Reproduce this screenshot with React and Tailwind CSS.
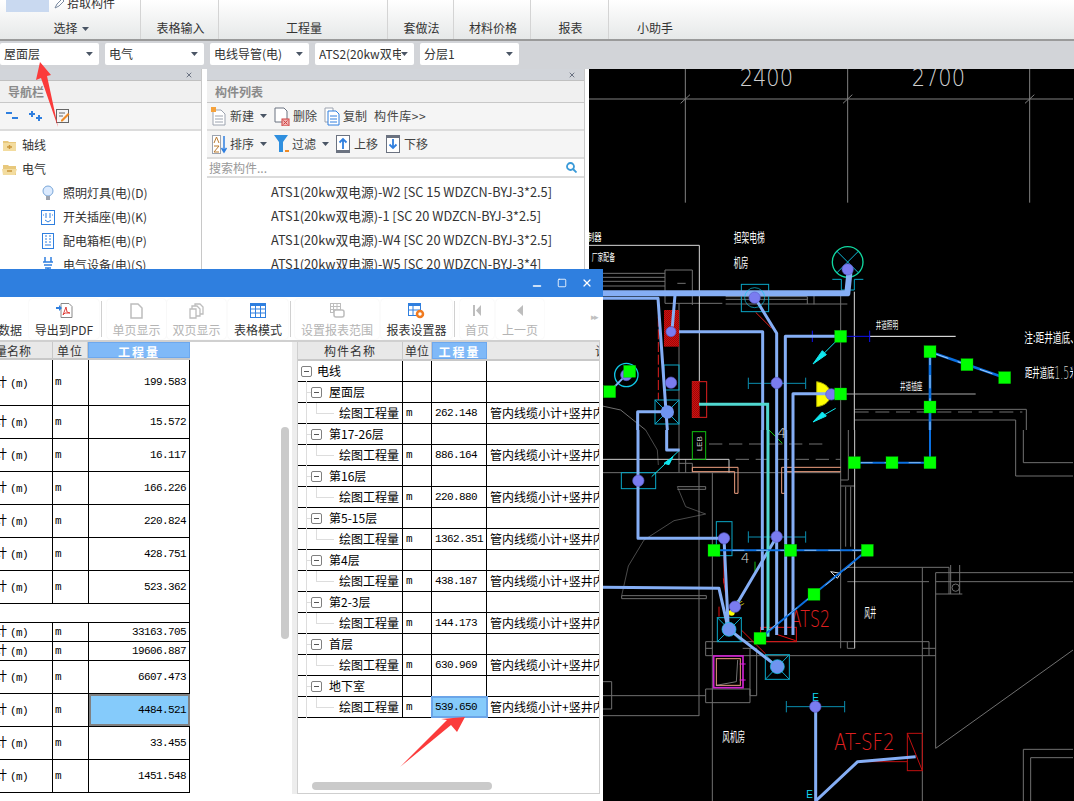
import React from 'react';
import { X, Minus, Square } from 'lucide-react';

const cjk = "font-['Noto_Sans_CJK_SC',sans-serif]";
const mono = "font-['Liberation_Mono','Noto_Sans_CJK_SC',monospace]";

const Caret = ({ className = 'text-gray-600' }) => (
  <svg width="7" height="4" viewBox="0 0 7 4" className={className}><path d="M0 0h7L3.5 4z" fill="currentColor" /></svg>
);

// top ribbon group labels
const RibbonGroup = ({ label, className, caret }) => (
  <div className={`flex items-end justify-center gap-1 pb-[2px] pl-[2px] border-r border-[#d4d4d4] text-[12px] text-[#333] ${className}`}>
    <span>{label}</span>
    {caret && <span className="pb-[6px]"><Caret /></span>}
  </div>
);

const Combo = ({ label }) => (
  <div className="w-[99px] h-[22px] bg-white rounded-[2px] flex items-center justify-between pl-1 pr-[6px] text-[12px] text-[#333]">
    <span className="overflow-hidden whitespace-nowrap w-[84px]">{label}</span>
    <Caret />
  </div>
);

const PanelHead = ({ title }) => (
  <>
    <div className="h-[12px] bg-[#d2d5da] flex items-center justify-end pr-2 border-b border-[#c0c0c0]">
      <X size={8} strokeWidth={3} className="text-gray-500" />
    </div>
    <div className="h-[22px] bg-[#f0f0f0] border-b border-[#c8c8c8] flex items-center px-2 text-[12px] font-bold text-[#8a8a8a]">{title}</div>
  </>
);

const TreeItem = ({ icon, label, child }) => (
  <div className={`h-6 flex items-center text-[12px] text-[#333] whitespace-nowrap ${child ? 'pl-[41px] gap-[8px]' : 'pl-[2px] gap-[5px]'}`}>
    {icon}
    <span>{label}</span>
  </div>
);

const Folder = ({ open }) => (
  <svg width="15" height="13" viewBox="0 0 15 13">
    <path d="M1 2h5l1 1h7v9H1z" fill="#e8c87c" />
    <path d={open ? 'M0 6h15l-2 6H1z' : 'M1 4h13v8H1z'} fill="#f3dc9f" />
    <path d="M5 8h5" stroke="#c9963a" strokeWidth="1.5" />
    {!open && <path d="M7.500 6v4" stroke="#c9963a" strokeWidth="1.5" />}
  </svg>
);

const Bulb = () => (
  <svg width="14" height="17" viewBox="0 0 14 17">
    <circle cx="7" cy="6" r="5" fill="#dbeafe" stroke="#7aa7d8" />
    <path d="M5 11h4v4H5z" fill="#9ca3af" />
  </svg>
);
const SwitchIcon = () => (
  <svg width="14" height="15" viewBox="0 0 14 15" fill="none" stroke="#2f7fdf">
    <rect x=".5" y=".5" width="13" height="14" />
    <path d="M5 3v5M9 3v5M4 10l3 2 3-2M2 5h1M11 5h1" />
  </svg>
);
const Cabinet = () => (
  <svg width="14" height="16" viewBox="0 0 14 16" fill="none" stroke="#2f7fdf">
    <rect x="1.500" y=".5" width="11" height="15" />
    <path d="M4 3h2M8 3h2M4 6h2M8 6h2M4 9h2M8 9h2M4 12h6" />
  </svg>
);
const Device = () => (
  <svg width="14" height="16" viewBox="0 0 14 16" fill="none" stroke="#2f7fdf" strokeWidth="1.500">
    <path d="M4 0v5M10 0v5M2 5h10M3 8h8M4 11h6M7 11v4M3 15h8" />
  </svg>
);

// toolbar icons for the list panel
const DocNew = () => (
  <svg width="16" height="19" viewBox="0 0 16 19">
    <path d="M2 3h8l4 4v11H2z" fill="#fff" stroke="#9ca3af" />
    <path d="M4 9h8M4 12h8M4 15h8" stroke="#9ca3af" />
    <rect x="0" y="0" width="5" height="5" fill="#f5a23c" />
  </svg>
);
const DocDel = () => (
  <svg width="16" height="19" viewBox="0 0 16 19">
    <path d="M1 1h9l3 3v11H1z" fill="#fff" stroke="#6b7280" />
    <rect x="8" y="12" width="7" height="7" fill="#f0b4b4" stroke="#d04040" />
    <path d="M9.500 13.500l4 4M13.500 13.500l-4 4" stroke="#d04040" />
  </svg>
);
const DocCopy = () => (
  <svg width="16" height="19" viewBox="0 0 16 19" fill="#fff">
    <path d="M1 1h8v14H1z" stroke="#9ca3af" />
    <path d="M4 4h8l3 3v11H4z" stroke="#2f7fdf" />
    <path d="M6 9h7M6 12h7M6 15h7" stroke="#2f7fdf" />
  </svg>
);
const SortIcon = () => (
  <svg width="15" height="19" viewBox="0 0 15 19" fill="none">
    <rect x=".5" y=".5" width="8" height="18" fill="#fff" stroke="#9ca3af" />
    <path d="M2 8l2.500-6L7 8M2 11h5l-5 6h5" stroke="#b97a2f" />
    <path d="M12 1v15M9.500 13l2.500 4 2.500-4" stroke="#2f7fdf" strokeWidth="1.500" />
  </svg>
);
const FilterIcon = () => (
  <svg width="15" height="18" viewBox="0 0 15 18">
    <path d="M0 0h14L9 7v10H5V7z" fill="#2f8fdf" />
    <path d="M11 15h4v2h-4z" fill="#f08a24" />
  </svg>
);
const MoveIcon = ({ down }) => (
  <svg width="14" height="18" viewBox="0 0 14 18" fill="none">
    <rect x=".5" y=".5" width="13" height="17" fill="#fff" stroke="#6b7280" />
    {down ? <path d="M0 0h14v3H0z" fill="#6b7280" /> : <path d="M0 15h14v3H0z" fill="#6b7280" />}
    <path d={down ? 'M7 4v9M3.500 9.500L7 13l3.500-3.500' : 'M7 14V4M3.500 7.500L7 4l3.500 3.500'} stroke="#2f7fdf" strokeWidth="1.800" />
  </svg>
);

const ToolBtn = ({ w, icon, label, dim }) => (
  <div className={`${w} h-[40px] bg-white rounded-[4px] shadow-[0_0_2px_#eee] flex flex-col items-center justify-between text-[12px] leading-[16px] whitespace-nowrap ${dim ? 'text-[#b4b4b4]' : 'text-[#333]'}`}>
    <div className="h-[20px] pt-[4px] flex items-center">{icon}</div>
    <span className="pb-[1px]">{label}</span>
  </div>
);
const Sep = () => <div className="w-px h-[36px] bg-[#d0d0d0] mx-[1px]" />;

const GreyDoc = () => (
  <svg width="13" height="16" viewBox="0 0 13 16"><path d="M1 1h7l4 4v10H1z" fill="#fff" stroke="#bdbdbd" strokeWidth="1.500" /></svg>
);
const GreyDocs = () => (
  <svg width="15" height="16" viewBox="0 0 15 16" fill="#fff" stroke="#bdbdbd" strokeWidth="1.300">
    <path d="M6 1h5l3 3v7H6z" /><path d="M3 3h5l3 3v7H3z" /><path d="M1 6h6v9H1z" />
  </svg>
);
const GridIcon = ({ color = '#2f7fdf', w = 16, h = 15 }) => (
  <svg width={w} height={h} viewBox="0 0 16 15" fill="none" stroke={color}>
    <rect x=".5" y=".5" width="15" height="14" />
    <path d="M0 1.500h16" strokeWidth="3" />
    <path d="M0 6h16M0 10h16M5.500 2v13M10.500 2v13" />
  </svg>
);
const PdfIcon = () => (
  <svg width="17" height="15" viewBox="0 0 17 15">
    <path d="M5 .5h8l3 3v11H5z" fill="#fff" stroke="#888" />
    <path d="M7 12l3-8 1 5 3 1-5 0z" fill="none" stroke="#e0403a" />
    <path d="M0 4h3V2l3 3-3 3V6H0z" fill="#2f7fdf" />
  </svg>
);
const RangeIcon = () => (
  <svg width="16" height="15" viewBox="0 0 16 15" fill="#fff" stroke="#bdbdbd">
    <rect x="1.500" y=".5" width="10" height="9" />
    <path d="M1.500 3.500h10M1.500 6.500h10M4.500 1v9M8 1v9" />
    <rect x="5" y="7" width="10" height="7" rx="2" strokeWidth="1.500" />
  </svg>
);
const ReportGear = () => (
  <svg width="17" height="16" viewBox="0 0 17 16" fill="none">
    <rect x=".5" y=".5" width="12" height="12" stroke="#2f7fdf" />
    <path d="M0 1.500h13" stroke="#2f7fdf" strokeWidth="3" />
    <path d="M0 7h13M5 2v11" stroke="#2f7fdf" />
    <circle cx="12" cy="11" r="3" stroke="#f07a20" strokeWidth="2.500" fill="#fff" />
  </svg>
);
const FirstIcon = () => (
  <svg width="8" height="11" viewBox="0 0 8 11" fill="#bdbdbd"><rect width="2" height="11" /><path d="M8 0v11L3 5.500z" /></svg>
);
const PrevIcon = () => (
  <svg width="6" height="11" viewBox="0 0 6 11" fill="#bdbdbd"><path d="M6 0v11L0 5.500z" /></svg>
);

// left report table, heights are the row heights of the sheet
const leftRows = [
  [46, '199.583'], [33, '15.572'], [33, '16.117'], [33, '166.226'], [33, '220.824'], [33, '428.751'], [33, '523.362'],
  [19, null], [19, '33163.705'], [19, '19606.887'], [33, '6607.473'], [33, '4484.521', true], [33, '33.455'], [33, '1451.548'],
];

const LeftTable = () => (
  <div className="w-[190px] text-[12px] text-black">
    <div className="h-[18px] flex bg-[#e8e8e8] border-b-2 border-[#c8c8c8] text-[#333] leading-[17px]">
      <div className="w-[53px] overflow-hidden whitespace-nowrap border-r border-[#c8c8c8]"><span className="-ml-[5px] block">量名称</span></div>
      <div className="w-[35px] text-center border-r border-[#c8c8c8] tracking-[1px]">单位</div>
      <div className="flex-1 text-center bg-[#7fb9f8] text-white font-bold tracking-[2px] border border-[#6da8ee]">工程量</div>
    </div>
    {leftRows.map(([h, v, sel], i) => (
      v ? (
        <div key={i} style={{ height: h }} className="flex border-b border-black">
          <div className="w-[53px] overflow-hidden border-r border-black flex items-center whitespace-nowrap">
            <span className="-ml-[5px]">计<span className={`${mono} text-[11px] tracking-[-0.6px] ml-[3px]`}>(m)</span></span>
          </div>
          <div className={`w-[36px] border-r border-black flex items-center pl-[2px] ${mono} text-[11px]`}>m</div>
          <div className={`flex-1 border-r border-black flex items-center justify-end pr-[3px] ${mono} text-[11px] tracking-[-0.6px] ${sel ? 'bg-[#85cbfb] outline-2 -outline-offset-2 outline-[#808080]' : ''}`}>{v}</div>
        </div>
      ) : (
        <div key={i} style={{ height: h }} className="border-b border-r border-black" />
      )
    ))}
  </div>
);

const rightRows = [
  { l: 0, name: '电线' },
  { l: 1, name: '屋面层' },
  { l: 2, v: '262.148' },
  { l: 1, name: '第17-26层' },
  { l: 2, v: '886.164' },
  { l: 1, name: '第16层' },
  { l: 2, v: '220.880' },
  { l: 1, name: '第5-15层' },
  { l: 2, v: '1362.351' },
  { l: 1, name: '第4层' },
  { l: 2, v: '438.187' },
  { l: 1, name: '第2-3层' },
  { l: 2, v: '144.173' },
  { l: 1, name: '首层' },
  { l: 2, v: '630.969' },
  { l: 1, name: '地下室' },
  { l: 2, v: '539.650', sel: true },
];

const MinusBox = () => (
  <span className="w-[11px] h-[11px] rounded-[2px] border border-[#808080] bg-white flex items-center justify-center shrink-0">
    <span className="w-[5px] h-px bg-[#555]" />
  </span>
);

const RightRow = ({ l, name, v, sel }) => (
  <div className="h-[21px] flex border-b border-black text-[12px] text-black">
    <div className={`relative w-[105px] border-r border-black flex items-center whitespace-nowrap ${l === 0 ? 'pl-[3px] gap-[5px]' : l === 1 ? 'pl-[13px] gap-[7px]' : 'pl-[41px]'}`}>
      {l > 0 && <span className="absolute left-[8px] -top-px -bottom-px w-px bg-[#ddd]" />}
      {l === 1 && <span className="absolute left-[8px] top-[10px] w-[5px] h-px bg-[#ddd]" />}
      {l === 2 && <span className="absolute left-[18px] top-0 h-[11px] w-[18px] border-l border-b border-[#ddd]" />}
      {l < 2 && <MinusBox />}
      <span className="text-[12px]">{name || '绘图工程量'}</span>
    </div>
    <div className={`w-[29px] border-r border-black flex items-center pl-[3px] ${mono} text-[11px]`}>{v ? 'm' : ''}</div>
    <div className={`w-[55px] border-r border-black flex items-center pl-[3px] ${mono} text-[11px] tracking-[-0.6px] ${sel ? 'bg-[#85cbfb] outline-2 -outline-offset-1 outline-[#6ba5e8]' : ''}`}>{v}</div>
    <div className="flex-1 overflow-hidden flex items-center pl-[3px] whitespace-nowrap">{v ? '管内线缆小计+竖井内' : ''}</div>
  </div>
);

const Dialog = () => (
  <div className={`absolute left-0 top-[269px] bottom-0 w-[603px] bg-white flex flex-col ${cjk}`}>
    <div className="h-[28px] shrink-0 bg-[#2f7fdf] flex items-center justify-end gap-[14px] pr-[10px] text-white">
      <Minus size={12} strokeWidth={3} className="translate-y-[3px]" />
      <Square size={10} strokeWidth={2} />
      <X size={12} strokeWidth={2.5} />
    </div>
    <div className="h-[45px] shrink-0 flex items-center pl-0 border-b-2 border-[#d0d0d0] mr-[3px] gap-[1px] overflow-hidden">
      <div className="w-[28px] h-[40px] overflow-hidden flex items-end text-[12px] leading-[16px] text-[#333] whitespace-nowrap"><span className="-ml-[2px] pb-[1px]">数据</span></div>
      <ToolBtn w="w-[70px]" icon={<PdfIcon />} label="导出到PDF" />
      <Sep />
      <ToolBtn w="w-[59px] ml-[3px]" dim icon={<GreyDoc />} label="单页显示" />
      <ToolBtn w="w-[59px]" dim icon={<GreyDocs />} label="双页显示" />
      <ToolBtn w="w-[60px] ml-[1px]" icon={<GridIcon />} label="表格模式" />
      <Sep />
      <ToolBtn w="w-[84px] ml-[2px]" dim icon={<RangeIcon />} label="设置报表范围" />
      <ToolBtn w="w-[71px] ml-[1px]" icon={<ReportGear />} label="报表设置器" />
      <Sep />
      <ToolBtn w="w-[34px] ml-[3px]" dim icon={<FirstIcon />} label="首页" />
      <ToolBtn w="w-[48px] ml-[1px]" dim icon={<PrevIcon />} label="上一页" />
      <div className="flex-1 flex justify-end pr-[3px] pb-[4px] text-[#c0c0c0] text-[9px] tracking-[-2px]">▸▸</div>
    </div>
    <div className="flex-1 flex min-h-0">
      <div className="relative w-[292px] shrink-0">
        <LeftTable />
        <div className="absolute left-[281px] top-[85px] w-[8px] h-[212px] rounded-[4px] bg-[#cacaca]" />
      </div>
      <div className="w-[6px] bg-[#ededed] border-r border-[#cfcfcf] h-[452px]" />
      <div className="relative w-[302px] h-[452px] border-b border-r border-[#cfcfcf]">
        <div className="h-[19px] flex bg-[#e8e8e8] border-b-2 border-[#c8c8c8] text-[12px] text-[#333] tracking-[1px] leading-[17px] overflow-hidden">
          <div className="w-[105px] text-center border-r border-[#c8c8c8]">构件名称</div>
          <div className="w-[29px] text-center border-r border-[#c8c8c8] tracking-[0px]">单位</div>
          <div className="w-[55px] text-center bg-[#7fb9f8] text-white font-bold tracking-[2px] border border-[#6da8ee]">工程量</div>
          <div className="flex-1 overflow-hidden whitespace-nowrap pl-[108px]">计算式</div>
        </div>
        {rightRows.map((r, i) => <RightRow key={i} {...r} />)}
        <div className="absolute left-[14px] bottom-[3px] w-[180px] h-[8px] rounded-[4px] bg-[#cacaca]" />
      </div>
    </div>
  </div>
);

// CAD canvas, coordinates are 3x page pixels with the origin at x=590, y=60
const G = ({ x, y }) => <rect x={x - 18} y={y - 18} width="36" height="36" fill="#00ff00" stroke="#00b000" strokeWidth="1" />;
const Dot = ({ x, y, r = 17 }) => (
  <circle cx={x} cy={y} r={r} fill="#7a7cf0" stroke="#5a5cc8" strokeWidth="2" />
);
const XBox = ({ x, y, w, h }) => (
  <g stroke="#0aa8c8" strokeWidth="3" fill="none">
    <rect x={x} y={y} width={w} height={h} />
    <path d={`M${x} ${y}L${x + w} ${y + h}M${x + w} ${y}L${x} ${y + h}`} />
  </g>
);
const Dim = ({ x1, x2, y, c = '#0a8fb0' }) => (
  <path d={`M${x1} ${y}H${x2}M${x1} ${y - 17}v34M${x2} ${y - 17}v34`} stroke={c} strokeWidth="3" fill="none" />
);
const T = ({ x, y, s = 30, c = '#fff', children, ...rest }) => (
  <text x={x} y={y} fontSize={s} fill={c} fontFamily="'Noto Sans CJK SC',sans-serif" lengthAdjust="spacingAndGlyphs" {...rest}>{children}</text>
);
const thin = "'DejaVu Sans',sans-serif";

const Cad = () => (
  <svg viewBox="0 27 1452 2196" width="484" height="732" className="block shrink-0">
    <defs>
      <pattern id="hatch" width="6" height="6" patternUnits="userSpaceOnUse">
        <rect width="6" height="6" fill="#d01010" />
        <path d="M0 6L6 0" stroke="#600" strokeWidth="1.500" />
      </pattern>
    </defs>
    {/* axis dimensions */}
    <g stroke="#808080" strokeWidth="3" fill="none">
      <path d="M0 117H1452M289 27V428M776 27V428M1322 27V428" />
      <path d="M275 130L303 104M762 130L790 104M1308 130L1336 104" />
    </g>
    <T x="452" y="77" s="74" c="#d0d0d0" textLength="160" fontFamily={thin} fontWeight="200">2400</T>
    <T x="968" y="77" s="74" c="#d0d0d0" textLength="160" fontFamily={thin} fontWeight="200">2700</T>

    <T x="-6" y="542" s="32" textLength="44">制器</T>
    <T x="8" y="602" s="30" textLength="70">厂家配备</T>
    <T x="434" y="545" s="38" textLength="93">担架电梯</T>
    <T x="434" y="620" s="38" textLength="44">机房</T>
    <T x="860" y="808" s="30" textLength="67">井道照明</T>
    <T x="933" y="990" s="30" textLength="67">井道插座</T>
    <T x="1306" y="846" s="38" textLength="190">注:距井道底、井</T>
    <T x="1308" y="950" s="38" textLength="88">距井道底</T>
    <T x="1396" y="956" s="54" c="#ccc" textLength="45" fontFamily={thin} fontWeight="200">1.5</T>
    <T x="1442" y="950" s="38" textLength="22">米</T>

    {/* walls upper */}
    <g stroke="#707070" strokeWidth="3" fill="none">
      <path d="M228 630H310V735M228 630V730H400M40 640H228M40 652H228M40 664H228M40 678H228M265 670H290M270 730V1110M410 710H655V732M410 718H655M410 732H775M675 708V733M755 700V1110" />
      <path d="M797 1048H1312V1110M797 1080H1280V1110" />
      <path d="M797 1056H1300" strokeDasharray="42 20" />
      <path d="M40 1038L95 1050L170 1110" />
    </g>
    <path d="M0 556H331V965M796 695V1110" stroke="#d8d8d8" strokeWidth="3" fill="none" />
    <path d="M208 770V1020" stroke="#e02020" strokeWidth="3" strokeDasharray="30 8" />
    <path d="M500 757L548 805" stroke="#e02020" strokeWidth="3" />
    <rect x="225" y="750" width="45" height="110" fill="url(#hatch)" />
    <rect x="310" y="965" width="43" height="107" fill="none" stroke="#e02020" strokeWidth="3" />
    <rect x="310" y="965" width="22" height="107" fill="url(#hatch)" />
    <path d="M842 829H1100" stroke="#fff" strokeWidth="3" />
    <path d="M770 1002H1160" stroke="#aaa" strokeWidth="3" />
    <path d="M772 829H842M670 812v34M842 812v34" stroke="#1010f0" strokeWidth="3" />

    {/* cyan symbols upper */}
    <g stroke="#0aa8c8" strokeWidth="3" fill="none">
      <rect x="457" y="673" width="82" height="82" />
      <rect x="225" y="915" width="45" height="75" />
      <path d="M730 658H757V690H796V658H823" />
      <circle cx="112" cy="945" r="35" stroke="#10c8e8" strokeWidth="4" />
    </g>
    <XBox x={198} y={1020} w={72} h={72} />
    <circle cx="776" cy="606" r="46" fill="none" stroke="#10d8a0" strokeWidth="4" />
    <path d="M743 573L809 639M809 573L743 639" stroke="#10b8d8" strokeWidth="3" />
    <Dim x1={478} x2={650} y={970} />
    <path d="M683 965C715 970 725 990 725 1003C725 1020 710 1038 683 1040Z" fill="#ffff00" stroke="#a8a800" strokeWidth="3" />

    {/* wires upper */}
    <g stroke="#85aef5" fill="none" strokeLinejoin="round">
      <path d="M0 700H775L782 630" strokeWidth="18" />
      <path d="M0 715H207L235 1110M258 705L250 800M270 815H521V1110M497 712L563 820V1110M740 829H589V1110M740 1001H612V1110M146 1110V1055H235" strokeWidth="9" />
      <path d="M62 995L122 934" strokeWidth="6" />
    </g>
    <path d="M330 1033H536V1110" stroke="#50d8d0" strokeWidth="9" fill="none" />
    <path d="M1023 875V1110M1023 875L1247 953" stroke="#0a6fe0" strokeWidth="8" fill="none" />
    <path d="M1023 875V1110M1040 882L1230 948" stroke="#fff" strokeWidth="2" strokeDasharray="40 30" fill="none" />
    <g stroke="#10e8f0" strokeWidth="3" fill="#10e8f0">
      <path d="M740 845L705 880" />
      <path d="M672 912L700 872L712 884Z" />
      <path d="M740 1045L705 1065" />
      <path d="M672 1086L700 1056L712 1068Z" />
    </g>
    <Dot x={776} y={628} />
    <Dot x={497} y={713} />
    <circle cx="497" cy="713" r="30" fill="none" stroke="#10c8e8" strokeWidth="2" />
    <Dot x={246} y={815} r={15} />
    <Dot x={246} y={968} />
    <Dot x={112} y={945} />
    <Dot x={563} y={969} />
    <Dot x={727} y={1003} />
    <circle cx="235" cy="1056" r="20" fill="#6f94f0" />
    <G x={755} y={829} />
    <G x={755} y={1002} />
    <G x={1023} y={875} />
    <G x={1134} y={914} />
    <G x={1247} y={953} />
    <G x={1023} y={1041} />
    <G x={122} y={934} />
    <G x={62} y={995} />

    {/* lower half, origin moved to page y=430 */}
    <g transform="translate(0 1110)">
      <g stroke="#707070" strokeWidth="3" fill="none">
        <path d="M38 128H755M330 128V858M38 797H350M38 857H330M38 755H68V837H38" />
        <path d="M755 0V655M775 455H1020M775 412H1080V492M1040 428H1452M1040 455H1452M1000 412V1113M1040 428V955M1040 955L1452 660M1040 492H1120M1085 405V492M1112 405V492" />
        <path d="M350 635H1020M350 677H1040M350 635V677M370 635V655H350M775 635V655H797M1020 635V677M1000 655H1040M350 777H483V818H350V777M461 655H503V797H483V655" />
        <path d="M370 128V1113M778 0V150H755M770 170V350M785 170V350M755 168H797" />
        <path d="M98 497H352V506H98ZM265 170H350V178H265" />
        <path d="M270 0V128M270 100H310V128M290 88V128" />
        <path d="M1280 0V138H1452M1303 0V98H1452" />
        <path d="M1303 1113V958H1452M1325 1113V983H1452" />
        <path d="M265 170L290 230L350 252L255 272L165 330L118 408L98 497M170 0L205 60L208 105" strokeWidth="2" />
        <circle cx="1100" cy="473" r="11" />
      </g>
      <path d="M38 88H420V128M797 0V655" stroke="#d0d0d0" strokeWidth="3" fill="none" />
      <path d="M360 42H705M440 88H755" stroke="#707070" strokeWidth="3" strokeDasharray="40 20" />
      <path d="M310 112H447V190H437V125H310ZM755 112H578V190H590V125H755" fill="none" stroke="#f0a080" strokeWidth="3" />
      <rect x="310" y="5" width="40" height="83" fill="none" stroke="#10c010" strokeWidth="3" />
      <T x="0" y="0" s="24" c="#ccc" fontFamily="'Liberation Sans',sans-serif" transform="translate(339 64) rotate(-90)">LEB</T>

      <rect x="374" y="678" width="88" height="95" fill="none" stroke="#d020d0" strokeWidth="5" />
      <rect x="382" y="686" width="72" height="80" fill="none" stroke="#f0a080" strokeWidth="3" />
      <path d="M382 766L442 755L446 690" stroke="#aaa" strokeWidth="2" fill="none" />
      <path d="M452 702H470M452 750H470" stroke="#e020e0" strokeWidth="3" />

      <g stroke="#e01010" strokeWidth="3" fill="none">
        <rect x="515" y="592" width="107" height="43" />
        <path d="M560 612L620 632M457 600L530 672M405 380V460M403 445L420 560M390 530V560" />
      </g>
      <g stroke="#c01010" strokeWidth="3" fill="none">
        <rect x="955" y="910" width="45" height="112" />
        <path d="M955 910L1000 1022M805 995H955" />
      </g>
      <T x="605" y="590" s="70" c="#e02020" textLength="118" fontFamily={thin} fontWeight="200">ATS2</T>
      <T x="735" y="960" s="70" c="#e02020" textLength="182" fontFamily={thin} fontWeight="200">AT-SF2</T>
      <T x="826" y="560" s="38" textLength="35">风井</T>
      <T x="400" y="932" s="38" textLength="68">风机房</T>
      <T x="455" y="400" s="42" c="#ddd" fontFamily={thin} fontWeight="200">4</T>
      <T x="565" y="24" s="42" c="#ddd" fontFamily={thin} fontWeight="200">4</T>
      <T x="670" y="812" s="30" c="#10d8f0" fontFamily="'Liberation Sans',sans-serif">E</T>
      <T x="652" y="1105" s="30" c="#10d8f0" fontFamily="'Liberation Sans',sans-serif">E</T>
      <T x="450" y="530" s="28" c="#e8e020" fontFamily="'Liberation Sans',sans-serif" transform="rotate(-30 450 530)">E</T>
      <path d="M725 425L755 430L745 445Z" fill="none" stroke="#ddd" strokeWidth="3" />
      <path d="M498 395V425" stroke="#10c010" strokeWidth="3" />
      <path d="M540 0L580 40" stroke="#10c010" strokeWidth="3" />

      <g stroke="#0aa8c8" strokeWidth="3" fill="none">
        <rect x="97" y="128" width="103" height="48" />
        <rect x="382" y="275" width="47" height="102" />
        <path d="M188 140L272 60" stroke="#10e8f0" />
      </g>
      <path d="M225 100L252 80L240 104Z" fill="#10e8f0" stroke="#10e8f0" strokeWidth="3" />
      <XBox x={385} y={563} w={72} h={72} />
      <XBox x={529} y={674} w={72} h={74} />
      <Dim x1={478} x2={650} y={321} />
      <Dim x1={592} x2={767} y={830} />
      <circle cx="428" cy="548" r="9" fill="#ffff00" />

      <g stroke="#85aef5" fill="none" strokeLinejoin="round" strokeWidth="9">
        <path d="M520 0V600M563 0V615M590 0V615M612 0V615" />
        <path d="M147 0V325H405L418 598M38 472L390 475L418 598M563 320L430 545M420 598L565 710" />
        <path d="M233 0V60H272" />
        <path d="M680 830V1113L806 995L980 980" />
      </g>
      <path d="M537 0V620" stroke="#50d8d0" strokeWidth="9" />
      <path d="M375 361H835M513 625L835 361M796 98H1023V0" stroke="#0a6fe0" strokeWidth="6" fill="none" />
      <path d="M430 361H830M540 600L820 378M815 98H1020" stroke="#fff" strokeWidth="1.500" strokeDasharray="36 36" fill="none" />

      <Dot x={148} y={152} />
      <Dot x={405} y={325} />
      <Dot x={563} y={320} />
      <Dot x={438} y={530} />
      <Dot x={679} y={830} />
      <circle cx="420" cy="598" r="21" fill="#6f94f0" stroke="#10c8e8" strokeWidth="2" />
      <circle cx="565" cy="710" r="21" fill="#6f94f0" stroke="#10c8e8" strokeWidth="2" />
      <G x={796} y={98} />
      <G x={909} y={98} />
      <G x={1023} y={98} />
      <G x={375} y={361} />
      <G x={605} y={361} />
      <G x={835} y={361} />
      <G x={675} y={493} />
      <G x={513} y={625} />
    </g>
  </svg>
);

export default function App() {
  return (
    <div className={`relative w-[1074px] h-[801px] overflow-hidden bg-white flex flex-col ${cjk}`}>
      {/* ribbon */}
      <div className="h-[41px] shrink-0 flex bg-gradient-to-b from-white to-[#e6e8e8] border-b-2 border-[#9a9a9a]">
        <div className="relative w-[141px]">
          <div className="absolute left-[6px] top-0 w-[43px] h-[12px] bg-[#c9d9f0]" />
          <div className="absolute left-[54px] -top-[5px] flex items-center gap-[2px] text-[12px] text-[#333] leading-[16px]">
            <svg width="11" height="11" viewBox="0 0 11 11" fill="none" stroke="#7a8aa0"><path d="M1 10l2-4 5-5 2 2-5 5z" /></svg>
            <span>拾取构件</span>
          </div>
          <RibbonGroup label="选择" caret className="absolute inset-0" />
        </div>
        <RibbonGroup label="表格输入" className="w-[78px]" />
        <RibbonGroup label="工程量" className="w-[169px]" />
        <RibbonGroup label="套做法" className="w-[66px]" />
        <RibbonGroup label="材料价格" className="w-[77px]" />
        <RibbonGroup label="报表" className="w-[78px]" />
        <div className="w-[90px] flex items-end justify-center pb-[2px] pl-[2px] text-[12px] text-[#333]">小助手</div>
      </div>

      {/* floor / type selectors */}
      <div className="h-[28px] shrink-0 bg-[#d2d4d8] flex items-center gap-[6px] pl-0 pb-[3px]">
        <Combo label="屋面层" />
        <Combo label="电气" />
        <Combo label="电线导管(电)" />
        <Combo label="ATS2(20kw双电源)" />
        <Combo label="分层1" />
      </div>

      <div className="flex-1 flex min-h-0 bg-[#f4f4f4]">
        {/* navigation */}
        <div className="w-[202px] shrink-0 bg-white border-r border-[#c8c8c8] flex flex-col">
          <PanelHead title="导航栏" />
          <div className="h-[28px] bg-[#f5f5f5] border-b-2 border-[#dcdcdc] flex items-center gap-[11px] pl-[6px] mb-[1px]">
            <svg width="12" height="8" viewBox="0 0 12 8" fill="#2f7fdf"><rect width="6" height="2" /><rect x="6" y="5" width="6" height="2" /></svg>
            <svg width="13" height="10" viewBox="0 0 13 10" fill="#2f7fdf"><path d="M2 0h2v2h2v2H4v2H2V4H0V2h2zM9 4h2v2h2v2h-2v2H9V8H7V6h2z" /></svg>
            <svg width="14" height="14" viewBox="0 0 14 14" className="ml-[3px]" fill="none">
              <rect x=".5" y=".5" width="12" height="13" stroke="#666" />
              <path d="M3 4h6M3 7h4" stroke="#666" />
              <path d="M5 11l7-7 1.500 1.500-7 7H5z" fill="#f08a24" />
            </svg>
          </div>
          <div className="pt-[1px] overflow-hidden">
            <TreeItem icon={<Folder />} label="轴线" />
            <TreeItem icon={<Folder open />} label="电气" />
            <TreeItem child icon={<Bulb />} label="照明灯具(电)(D)" />
            <TreeItem child icon={<SwitchIcon />} label="开关插座(电)(K)" />
            <TreeItem child icon={<Cabinet />} label="配电箱柜(电)(P)" />
            <TreeItem child icon={<Device />} label="电气设备(电)(S)" />
          </div>
        </div>
        <div className="w-[5px] shrink-0 bg-white" />
        {/* component list */}
        <div className="w-[378px] shrink-0 bg-white border-r border-[#c8c8c8] flex flex-col text-[12px] text-[#444]">
          <PanelHead title="构件列表" />
          <div className="h-[28px] bg-[#f5f5f5] border-b-2 border-[#dcdcdc] flex items-center pl-[4px] whitespace-nowrap">
            <DocNew />
            <span className="ml-[3px]">新建</span>
            <span className="ml-[6px]"><Caret /></span>
            <span className="ml-[7px]"><DocDel /></span>
            <span className="ml-[3px]">删除</span>
            <span className="ml-[7px]"><DocCopy /></span>
            <span className="ml-[3px]">复制</span>
            <span className="ml-[7px] tracking-[0.6px]">构件库&gt;&gt;</span>
          </div>
          <div className="h-[28px] bg-[#f5f5f5] border-b-2 border-[#dcdcdc] flex items-center pl-[5px] whitespace-nowrap">
            <SortIcon />
            <span className="ml-[3px]">排序</span>
            <span className="ml-[6px]"><Caret /></span>
            <span className="ml-[7px]"><FilterIcon /></span>
            <span className="ml-[3px]">过滤</span>
            <span className="ml-[6px]"><Caret /></span>
            <span className="ml-[7px]"><MoveIcon /></span>
            <span className="ml-[4px]">上移</span>
            <span className="ml-[8px]"><MoveIcon down /></span>
            <span className="ml-[4px]">下移</span>
          </div>
          <div className="h-[19px] border-b-2 border-[#dcdcdc] flex items-center justify-between pl-[2px] pr-[7px] text-[#999]">
            <span>搜索构件...</span>
            <svg width="11" height="11" viewBox="0 0 11 11" fill="none" stroke="#3a9ad8" strokeWidth="1.800"><circle cx="4.500" cy="4.500" r="3.500" /><path d="M7 7l3.500 3.500" /></svg>
          </div>
          <div className="pl-[64px] pt-[2px] text-[12.750px] text-[#333] whitespace-nowrap overflow-hidden">
            <div className="h-6 flex items-center">ATS1(20kw双电源)-W2 [SC 15 WDZCN-BYJ-3*2.5]</div>
            <div className="h-6 flex items-center">ATS1(20kw双电源)-1 [SC 20 WDZCN-BYJ-3*2.5]</div>
            <div className="h-6 flex items-center">ATS1(20kw双电源)-W4 [SC 20 WDZCN-BYJ-3*2.5]</div>
            <div className="h-6 flex items-center">ATS1(20kw双电源)-W5 [SC 20 WDZCN-BYJ-3*4]</div>
          </div>
        </div>
        <div className="w-[4px] shrink-0 bg-white" />
        <div className="flex-1 bg-black overflow-hidden"><Cad /></div>
      </div>

      <Dialog />

      {/* annotation arrows */}
      <svg className="absolute inset-0 pointer-events-none" width="1074" height="801">
        <path d="M40 62L51 75L47 76L58 127L41 78L36 80Z" fill="#fb3b3b" />
        <path d="M465 717L457 732L451 725L400 767L447 720L441 719Z" fill="#fb3b3b" />
      </svg>
    </div>
  );
}
